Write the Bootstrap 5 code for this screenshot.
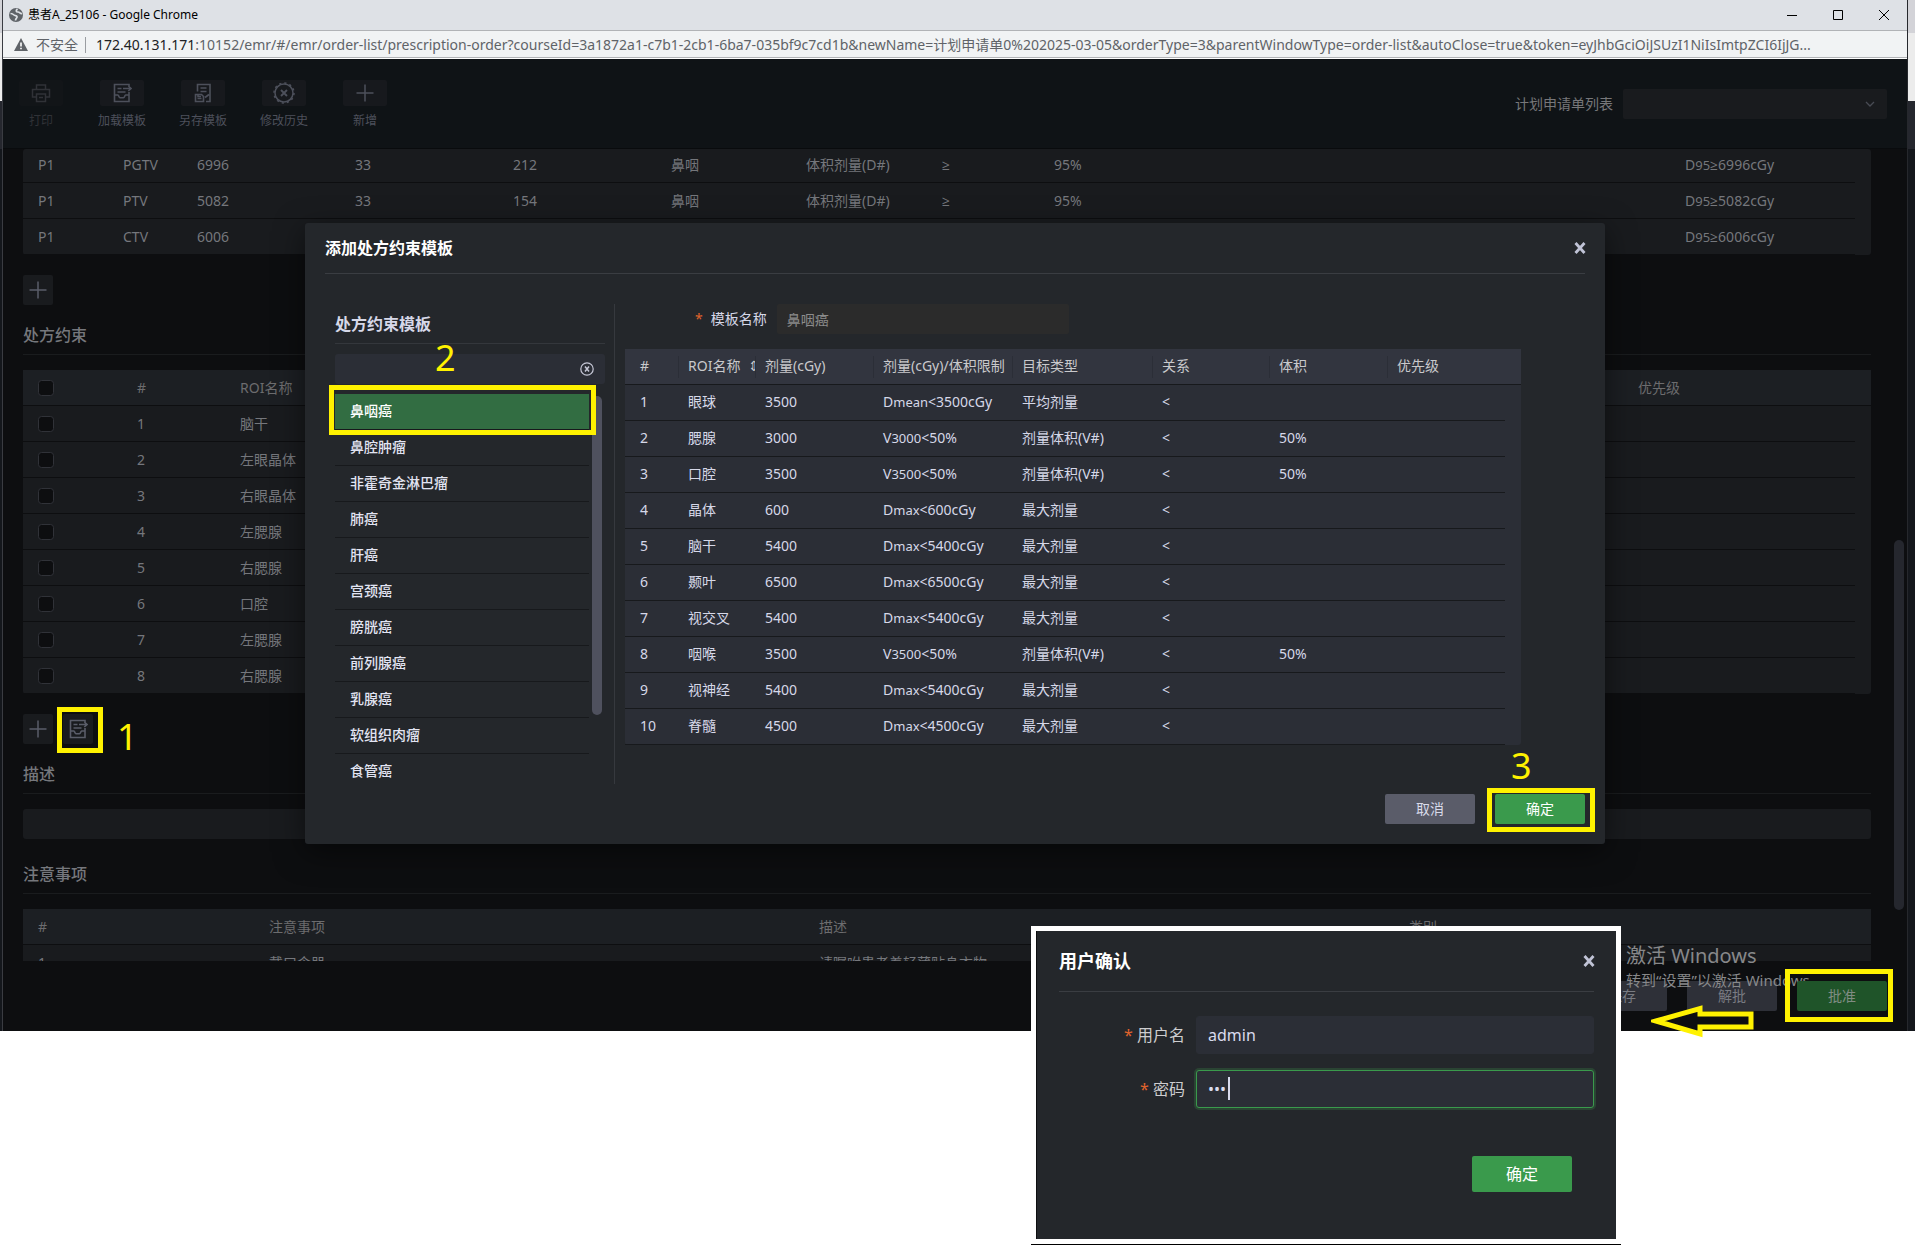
<!DOCTYPE html>
<html lang="zh-CN">
<head>
<meta charset="utf-8">
<meta name="viewport" content="width=device-width, initial-scale=1">
<title>患者A_25106</title>
<link rel="stylesheet" href="https://cdn.jsdelivr.net/npm/bootstrap@5.3.0/dist/css/bootstrap.min.css">
<style>
:root{--cjk:"Noto Sans","Open Sans","Noto Sans CJK SC",sans-serif;--mark-yellow:#fff200;--ok:#3a9a4c;--panel:#24272b;--field:#2b2e36}
body{background:#fff;font-family:var(--cjk);font-size:14px;line-height:20px;min-height:1250px;position:relative}
svg{display:block;fill:none;stroke:currentColor}
button,input,select{font-family:inherit}
/* desktop strip and browser window */
.desk{margin-right:3px;padding:0 7px 0 2px;background:linear-gradient(to bottom,#d3d3d8 0 33px,#ececec 33px 101px,#25272e 101px 149px,#14171c 149px)}
.win{border-left:1px solid #3a3c42;border-right:1px solid #26282d;background:#0d0e10;position:relative}
.titlebar{height:31px;background:#dee1e6;border-bottom:1px solid #b1b3b6;color:#000;font-size:12px;padding-left:5px}
.titlebar button{width:46px;height:30px;background:none;border:0;color:#000;padding:0}
.addr{height:28px;background:#f1f3f4;border-bottom:1px solid #fff;box-shadow:inset 0 -1px #b1b3b6;color:#5f6368;padding-left:11px}
.addr .sep{width:1px;height:16px;background:#9a9da1;margin:0 10px 0 7px}
.addr .host{color:#202124}
.url{white-space:nowrap}
/* page toolbar */
.tools{height:90px;background:#0f1316;border-bottom:1px solid #090b0d;padding:21px 20px 0 14px}
.tools ul{gap:33px}
.tool{width:48px;background:none;border:0;padding:0;color:#4d505b;font-size:12px;white-space:nowrap;line-height:18px}
.tool .ico{width:44px;height:26px;background:#17191d;border-radius:2px;margin-bottom:6px}
.tool:disabled{color:#303237}
.tool:disabled .ico{background:#121518}
.plan{margin-top:9px}
.plan-label{color:#77777a;margin-right:10px}
.plan-select{width:264px;height:30px;border:0;border-radius:2px;background-color:#191b1e;color:#77777a;
 background-image:url("data:image/svg+xml,%3csvg xmlns='http://www.w3.org/2000/svg' viewBox='0 0 12 12'%3e%3cpath fill='none' stroke='%23484b54' stroke-width='1.3' d='M2 4l4 4 4-4'/%3e%3c/svg%3e");background-size:12px;background-position:right 11px center}
/* main scroll area */
.pane{padding:0 36px 0 20px;color:#75777c}
.table.tb{table-layout:fixed;border-collapse:separate;border-spacing:0;margin-bottom:0;--bs-table-bg:transparent;--bs-table-color:inherit;color:inherit;background:#191b1e;border-radius:3px}
.table.tb>:not(caption)>*>*{height:36px;padding:0 0 0 10px;border:0;border-bottom:1px solid #0d0e10;font-weight:400;line-height:20px;vertical-align:middle;white-space:nowrap;overflow:hidden}
.table.tb>tbody>tr>td.gut{border-bottom-color:transparent}
.table.tb>:not(caption)>*>:first-child{padding-left:15px}
.table.tb>thead{background:#1c1f23;color:#6c6c6e}
.table.tb.cut>tbody>tr:first-child>td{height:34px;padding-bottom:2px}
.tb i{font-style:normal;font-size:13px;line-height:18px}
.sq{width:30px;height:30px;padding:0;border:0;border-radius:2px;background:#191b1e;color:#5a5d69;display:flex;align-items:center;justify-content:center}
.sec{font-size:16px;line-height:20px;font-weight:500;margin:0;padding:20px 0 9px;border-bottom:1px solid #1a1c1e;color:#75777c}
.after-sec{margin-top:15px}
.desc+.sec{margin-top:5px}
.acts{margin-top:20px;gap:10px}
.chk{width:16px;height:16px;margin:0;display:block;border-radius:2px;background-color:#0d0e10;border:1px solid #303238}
.desc{height:30px;border:0;border-radius:3px;background:#191b1e}
.clip{height:52px;overflow:hidden}
.foot{height:70px;padding:20px 20px 0 0;gap:20px}
.bt{width:90px;height:30px;border:0;border-radius:2px;padding:0;font-size:14px;line-height:20px;color:#fff;display:block}
.bt-dim{background:#2e3038;color:#797b82}
.bt-dimok{background:#1f5429;color:#808c83}
.bt-grey{background:#5a5c69;color:#d9dbea}
.bt-ok{background:var(--ok)}
.sbar{position:absolute;right:3px;top:540px;width:10px;height:370px;border-radius:5px;background:#25272e}
/* tutorial marks */
.ring{position:absolute;border:5px solid var(--mark-yellow);pointer-events:none}
.ring-1{inset:-7px -10px -9px -6px}
.ring-2{left:-6px;right:9px;top:-9px;height:50px}
.ring-3{inset:-6px -10px -8px -8px}
.ring-4{inset:-12px -6px -11px -12px}
.num{position:absolute;color:var(--mark-yellow);font-size:36px;line-height:40px}
.num-1{left:54px;top:3px}
.num-2{left:100px;top:-16px}
.num-3{left:16px;top:-48px}
.wm{position:absolute;right:0;top:941px;width:281px;color:#87888a;z-index:2;pointer-events:none}
.wm b{display:block;font-weight:400;font-size:20px;line-height:30px}
.wm span{display:block;font-size:15px;line-height:18px;white-space:nowrap}
.arrow{position:absolute;right:152px;top:1002px;color:var(--mark-yellow);z-index:3}
/* template dialog */
.dlg-wrap{position:absolute;left:0;right:0;top:223px;z-index:1}
.dlg{width:1300px;height:621px;background:var(--panel);border-radius:3px;box-shadow:0 8px 30px rgba(0,0,0,.5);color:#d6d8e8;padding:0 20px 20px}
.dlg-head{height:51px;border-bottom:1px solid #3a3d42}
.dlg-body{margin-top:30px}
.dlg-foot{gap:20px}
.dlg-title{font-size:16px;font-weight:700;line-height:20px;color:#fff;margin:0}
.xbtn{border:0;background:none;padding:0;color:#c0c3d6;margin-right:-2px}
.left{width:290px;height:480px;padding:10px 9px 0 10px;border-right:1px solid #36393e;position:relative}
.left h3{font-size:16px;font-weight:700;line-height:20px;margin:0 0 10px;padding-bottom:9px;border-bottom:1px solid #34373c}
.srch{height:30px;border:0;border-radius:3px;background:var(--field);color:#d6d8e8}
.clr{position:absolute;right:11px;top:8px;border:0;background:none;padding:0;color:#c6c8d6}
.tpl{margin:10px 16px 0 0;height:390px;overflow:hidden;border-radius:0}
.tpl .list-group-item{height:36px;padding:7px 15px 8px;border:0;border-bottom:1px solid #17191c;background:none;color:#e2e4f2;font-weight:500;border-radius:0;line-height:20px}
.tpl .list-group-item.active{background:#326d42;color:#fff;margin:0}
.tbar{position:absolute;right:12px;top:92px;width:10px;height:319px;border-radius:5px;background:#4f515e}
.right{padding-left:10px}
.name-row{padding-left:70px;margin-bottom:15px}
.name-row label{margin-right:10px}
.req{color:#e0632c}
.tname{width:292px;height:30px;border:0;border-radius:2px;background:#2b2b2b!important;color:#8c8c8c!important;font-size:14px;padding:0 10px}
.table.tb.lit{background:var(--field);width:896px}
.table.tb.lit>thead{background:#32353f;color:#c9c9cc}
.table.tb.lit>:not(caption)>*>*{border-bottom-color:#17191c;padding-bottom:2px}
.table.tb.lit>tbody>tr>td.gut{border-bottom-color:transparent}
.table.tb.lit>thead>tr>th+th:not(:last-child){background:linear-gradient(#2b2e37,#2b2e37) left center/1px 22px no-repeat}
/* user confirmation */
.auth{position:absolute;right:297px;top:926px;width:590px;z-index:5;background:#fff;padding:5px;border-bottom:1px solid #000}
.auth form{background:var(--panel);height:308px;padding:0 22px;font-size:16px;border-left:1px solid #0d0e10}
.auth-head{height:61px;border-bottom:1px solid #3a3d42;margin-bottom:24px}
.auth h2{font-size:18px;font-weight:700;line-height:24px;color:#fff;margin:0}
.auth label{width:126px;flex:none;margin-right:11px;color:#cdcdcf;white-space:nowrap}
.auth .form-control{height:38px;background:var(--field);border:1px solid var(--field);border-radius:3px;color:#d9dbee;font-size:16px;padding:0 11px;line-height:24px}
.auth .form-control.on{border-color:var(--ok);box-shadow:0 0 0 2px rgba(58,154,76,.25)}
.caret{position:absolute;left:32px;top:7px;width:2px;height:23px;background:#d9dbee}
.auth-foot{margin-top:48px;padding-right:22px}
.auth .bt{width:100px;height:36px;font-size:16px}
</style>
<script src="https://cdn.jsdelivr.net/npm/bootstrap@5.3.0/dist/js/bootstrap.bundle.min.js"></script>
</head>
<body>
<svg class="d-none" aria-hidden="true">
 <symbol id="i-load" viewBox="0 0 20 20"><path d="M17 9v9.500H2.500v-17H17v2M11 5.500h7.500M16.300 3l2.700 2.500L16.300 8M5.500 5.500h4M5.500 9h8M2.500 12h3.500c.6 0 1 2.800 2 2.800h3.500c1 0 1.400-2.800 2-2.800H17"/></symbol>
 <symbol id="i-save" viewBox="0 0 20 20"><path d="M4.500 8.500v-7H17v17h-4M7.500 5h6M7.500 8.500h6M2.500 11.500h6l2 2v5h-8zM4.500 15.500h4M5 11.500v2h3M12 14.500l4-3"/></symbol>
 <symbol id="i-x" viewBox="0 0 14 14"><path d="M2.500 2l9 10M11.500 2l-9 10" stroke-width="2.800"/></symbol>
</svg>

<div class="desk">
<div class="win">
 <header>
  <div class="titlebar d-flex align-items-center">
   <svg width="16" height="16" viewBox="0 0 16 16" class="me-1"><circle cx="8" cy="8" r="7" fill="#5f6368" stroke="none"/><path d="M2.500 6.500c2 0 2.500.5 3.500 1.500s2.500 0 3 1.500-1.500 2-1.500 4M9.500 2c-2 1.500-1.500 3 .5 3s2 2 4 1.500" stroke="#dee1e6" stroke-width="1.700"/></svg>
   <span class="me-auto">患者A_25106 - Google Chrome</span>
   <button type="button" aria-label="最小化"><svg class="mx-auto" width="12" height="12"><path d="M1 6.500h10"/></svg></button>
   <button type="button" aria-label="最大化"><svg class="mx-auto" width="12" height="12"><path d="M1.500 1.500h9v9h-9z"/></svg></button>
   <button type="button" aria-label="关闭"><svg class="mx-auto" width="12" height="12"><path d="M1 1l10 10M11 1L1 11"/></svg></button>
  </div>
  <div class="addr d-flex align-items-center">
   <svg width="14" height="13" viewBox="0 0 14 13"><path d="M7 0l7 13H0z" fill="#5f6368" stroke="none"/><path d="M7 4.500v4M7 9.700v1.500" stroke="#fff" stroke-width="1.600"/></svg>
   <span class="ms-2">不安全</span><span class="sep"></span>
   <span class="url"><span class="host">172.40.131.171</span>:10152/emr/#/emr/order-list/prescription-order?courseId=3a1872a1-c7b1-2cb1-6ba7-035bf9c7cd1b&amp;newName=计划申请单0%202025-03-05&amp;orderType=3&amp;parentWindowType=order-list&amp;autoClose=true&amp;token=eyJhbGciOiJSUzI1NiIsImtpZCI6IjJG...</span>
  </div>
 </header>

 <nav class="tools d-flex justify-content-between">
  <ul class="list-unstyled d-flex m-0">
   <li><button class="tool" disabled><span class="ico d-flex align-items-center justify-content-center mx-auto"><svg width="20" height="20" viewBox="0 0 20 20" stroke-width="1.500"><path d="M5.500 6V2h9v4M5.500 14H1.500V6.500h17V14h-4M5.500 11h9v7.500h-9zM8 14.500h4"/></svg></span>打印</button></li>
   <li><button class="tool"><span class="ico d-flex align-items-center justify-content-center mx-auto"><svg width="20" height="20" stroke-width="1.600"><use href="#i-load"/></svg></span>加载模板</button></li>
   <li><button class="tool"><span class="ico d-flex align-items-center justify-content-center mx-auto"><svg width="20" height="20" stroke-width="1.600"><use href="#i-save"/></svg></span>另存模板</button></li>
   <li><button class="tool"><span class="ico d-flex align-items-center justify-content-center mx-auto"><svg width="22" height="22" viewBox="0 0 22 22" stroke-width="1.500"><circle cx="11" cy="11" r="9"/><circle cx="11" cy="11" r="10" stroke-dasharray="2.200 3.036"/><path d="M8 8l6 6M14 8l-6 6" stroke-width="1.900"/></svg></span>修改历史</button></li>
   <li><button class="tool"><span class="ico d-flex align-items-center justify-content-center mx-auto"><svg width="18" height="18" stroke-width="1.500"><path d="M9 .5v17M.5 9h17"/></svg></span>新增</button></li>
  </ul>
  <div class="plan d-flex align-items-center align-self-start">
   <label class="plan-label" for="plan">计划申请单列表</label>
   <select id="plan" class="form-select plan-select"><option></option></select>
  </div>
 </nav>

 <main class="pane">
  <table class="table tb cut">
   <colgroup><col style="width:90px"><col style="width:74px"><col style="width:158px"><col style="width:158px"><col style="width:158px"><col style="width:135px"><col style="width:136px"><col style="width:112px"><col style="width:631px"><col><col style="width:16px"></colgroup>
   <tbody>
    <tr><td>P1</td><td>PGTV</td><td>6996</td><td>33</td><td>212</td><td>鼻咽</td><td>体积剂量(D#)</td><td>≥</td><td>95%</td><td>D<i>95</i>≥6996cGy</td><td class="gut"></td></tr>
    <tr><td>P1</td><td>PTV</td><td>5082</td><td>33</td><td>154</td><td>鼻咽</td><td>体积剂量(D#)</td><td>≥</td><td>95%</td><td>D<i>95</i>≥5082cGy</td><td class="gut"></td></tr>
    <tr><td>P1</td><td>CTV</td><td>6006</td><td></td><td></td><td></td><td></td><td></td><td></td><td>D<i>95</i>≥6006cGy</td><td class="gut"></td></tr>
   </tbody>
  </table>
  <div class="acts d-flex"><button class="sq" aria-label="新增"><svg width="18" height="18" stroke-width="1.500"><path d="M9 .5v17M.5 9h17"/></svg></button></div>

  <h2 class="sec">处方约束</h2>
  <table class="table tb after-sec">
   <colgroup><col style="width:104px"><col style="width:103px"><col style="width:1398px"><col><col style="width:16px"></colgroup>
   <thead><tr><th><input type="checkbox" class="form-check-input chk" aria-label="全选"></th><th>#</th><th>ROI名称</th><th>优先级</th><th></th></tr></thead>
   <tbody>
    <tr><td><input type="checkbox" class="form-check-input chk" aria-label="选择"></td><td>1</td><td>脑干</td><td></td><td class="gut"></td></tr>
    <tr><td><input type="checkbox" class="form-check-input chk" aria-label="选择"></td><td>2</td><td>左眼晶体</td><td></td><td class="gut"></td></tr>
    <tr><td><input type="checkbox" class="form-check-input chk" aria-label="选择"></td><td>3</td><td>右眼晶体</td><td></td><td class="gut"></td></tr>
    <tr><td><input type="checkbox" class="form-check-input chk" aria-label="选择"></td><td>4</td><td>左腮腺</td><td></td><td class="gut"></td></tr>
    <tr><td><input type="checkbox" class="form-check-input chk" aria-label="选择"></td><td>5</td><td>右腮腺</td><td></td><td class="gut"></td></tr>
    <tr><td><input type="checkbox" class="form-check-input chk" aria-label="选择"></td><td>6</td><td>口腔</td><td></td><td class="gut"></td></tr>
    <tr><td><input type="checkbox" class="form-check-input chk" aria-label="选择"></td><td>7</td><td>左腮腺</td><td></td><td class="gut"></td></tr>
    <tr><td><input type="checkbox" class="form-check-input chk" aria-label="选择"></td><td>8</td><td>右腮腺</td><td></td><td class="gut"></td></tr>
   </tbody>
  </table>
  <div class="acts d-flex">
   <button class="sq" aria-label="新增"><svg width="18" height="18" stroke-width="1.500"><path d="M9 .5v17M.5 9h17"/></svg></button>
   <div class="position-relative">
    <button class="sq" aria-label="加载模板"><svg width="20" height="20" stroke-width="1.600"><use href="#i-load"/></svg></button>
    <span class="ring ring-1"></span>
    <span class="num num-1">1</span>
   </div>
  </div>

  <h2 class="sec">描述</h2>
  <input class="form-control desc after-sec" aria-label="描述">

  <h2 class="sec">注意事项</h2>
  <div class="clip after-sec">
   <table class="table tb">
    <colgroup><col style="width:236px"><col style="width:550px"><col style="width:590px"><col><col style="width:16px"></colgroup>
    <thead><tr><th>#</th><th>注意事项</th><th>描述</th><th>类别</th><th></th></tr></thead>
    <tbody><tr><td>1</td><td>戴口含器</td><td>请嘱咐患者着轻薄贴身衣物</td><td></td><td class="gut"></td></tr></tbody>
   </table>
  </div>
 </main>

 <footer class="foot d-flex justify-content-end align-items-start">
  <button class="bt bt-dim">保存</button>
  <button class="bt bt-dim">解批</button>
  <div class="position-relative z-3"><button class="bt bt-dimok">批准</button><span class="ring ring-4"></span></div>
 </footer>

 <span class="sbar"></span>
 <div class="wm"><b>激活 Windows</b><span>转到“设置”以激活 Windows。</span></div>
 <svg class="arrow" width="104" height="38" viewBox="0 0 104 38" stroke-width="5"><path d="M5 19L49 6.500V12h51v13H49v7z"/></svg>

 <div class="dlg-wrap d-flex justify-content-center">
  <section class="dlg d-flex flex-column" role="dialog" aria-label="添加处方约束模板">
   <div class="dlg-head d-flex align-items-center justify-content-between">
    <h2 class="dlg-title">添加处方约束模板</h2>
    <button class="xbtn" aria-label="关闭"><svg width="14" height="14"><use href="#i-x"/></svg></button>
   </div>
   <div class="dlg-body d-flex">
    <div class="left flex-shrink-0">
     <h3>处方约束模板</h3>
     <div class="position-relative">
      <input class="form-control srch" aria-label="搜索模板">
      <button class="clr" aria-label="清空"><svg width="14" height="14" viewBox="0 0 14 14" stroke-width="1.200"><circle cx="7" cy="7" r="6.200"/><path d="M5 4.500l4 5M9 4.500l-4 5" stroke-width="1.500"/></svg></button>
      <span class="num num-2">2</span>
     </div>
     <span class="tbar"></span>
     <div class="position-relative">
      <div class="list-group tpl">
       <a href="#" class="list-group-item active">鼻咽癌</a><a href="#" class="list-group-item">鼻腔肿瘤</a><a href="#" class="list-group-item">非霍奇金淋巴瘤</a><a href="#" class="list-group-item">肺癌</a><a href="#" class="list-group-item">肝癌</a><a href="#" class="list-group-item">宫颈癌</a><a href="#" class="list-group-item">膀胱癌</a><a href="#" class="list-group-item">前列腺癌</a><a href="#" class="list-group-item">乳腺癌</a><a href="#" class="list-group-item">软组织肉瘤</a><a href="#" class="list-group-item">食管癌</a>
      </div>
      <span class="ring ring-2"></span>
     </div>
    </div>
    <div class="right flex-grow-1">
     <div class="name-row d-flex align-items-center">
      <label for="tname"><span class="req me-2">*</span>模板名称</label>
      <input id="tname" class="form-control tname" value="鼻咽癌" disabled>
     </div>
     <table class="table tb lit">
      <colgroup><col style="width:53px"><col style="width:77px"><col style="width:118px"><col style="width:139px"><col style="width:140px"><col style="width:117px"><col style="width:118px"><col><col style="width:16px"></colgroup>
      <thead><tr><th>#</th><th>ROI名称 <span class="ms-1">⇕</span></th><th>剂量(cGy)</th><th>剂量(cGy)/体积限制</th><th>目标类型</th><th>关系</th><th>体积</th><th>优先级</th><th></th></tr></thead>
      <tbody>
       <tr><td>1</td><td>眼球</td><td>3500</td><td>D<i>mean</i>&lt;3500cGy</td><td>平均剂量</td><td>&lt;</td><td></td><td></td><td class="gut"></td></tr>
       <tr><td>2</td><td>腮腺</td><td>3000</td><td>V<i>3000</i>&lt;50%</td><td>剂量体积(V#)</td><td>&lt;</td><td>50%</td><td></td><td class="gut"></td></tr>
       <tr><td>3</td><td>口腔</td><td>3500</td><td>V<i>3500</i>&lt;50%</td><td>剂量体积(V#)</td><td>&lt;</td><td>50%</td><td></td><td class="gut"></td></tr>
       <tr><td>4</td><td>晶体</td><td>600</td><td>D<i>max</i>&lt;600cGy</td><td>最大剂量</td><td>&lt;</td><td></td><td></td><td class="gut"></td></tr>
       <tr><td>5</td><td>脑干</td><td>5400</td><td>D<i>max</i>&lt;5400cGy</td><td>最大剂量</td><td>&lt;</td><td></td><td></td><td class="gut"></td></tr>
       <tr><td>6</td><td>颞叶</td><td>6500</td><td>D<i>max</i>&lt;6500cGy</td><td>最大剂量</td><td>&lt;</td><td></td><td></td><td class="gut"></td></tr>
       <tr><td>7</td><td>视交叉</td><td>5400</td><td>D<i>max</i>&lt;5400cGy</td><td>最大剂量</td><td>&lt;</td><td></td><td></td><td class="gut"></td></tr>
       <tr><td>8</td><td>咽喉</td><td>3500</td><td>V<i>3500</i>&lt;50%</td><td>剂量体积(V#)</td><td>&lt;</td><td>50%</td><td></td><td class="gut"></td></tr>
       <tr><td>9</td><td>视神经</td><td>5400</td><td>D<i>max</i>&lt;5400cGy</td><td>最大剂量</td><td>&lt;</td><td></td><td></td><td class="gut"></td></tr>
       <tr><td>10</td><td>脊髓</td><td>4500</td><td>D<i>max</i>&lt;4500cGy</td><td>最大剂量</td><td>&lt;</td><td></td><td></td><td class="gut"></td></tr>
      </tbody>
     </table>
    </div>
   </div>
   <div class="dlg-foot d-flex justify-content-end mt-auto">
    <button class="bt bt-grey">取消</button>
    <div class="position-relative"><button class="bt bt-ok">确定</button><span class="ring ring-3"></span><span class="num num-3">3</span></div>
   </div>
  </section>
 </div>
</div>
</div>

<section class="auth" role="dialog" aria-label="用户确认">
 <form onsubmit="return false">
  <div class="auth-head d-flex align-items-center justify-content-between">
   <h2>用户确认</h2>
   <button type="button" class="xbtn" aria-label="关闭"><svg width="14" height="14"><use href="#i-x"/></svg></button>
  </div>
  <div class="d-flex align-items-center mb-3">
   <label for="user" class="text-end"><span class="req">*</span> 用户名</label>
   <input id="user" class="form-control" value="admin">
  </div>
  <div class="d-flex align-items-center">
   <label for="pwd" class="text-end"><span class="req">*</span> 密码</label>
   <div class="position-relative flex-grow-1"><input id="pwd" type="password" class="form-control on" value="123"><span class="caret"></span></div>
  </div>
  <div class="auth-foot d-flex justify-content-end"><button class="bt bt-ok">确定</button></div>
 </form>
</section>
</body>
</html>
